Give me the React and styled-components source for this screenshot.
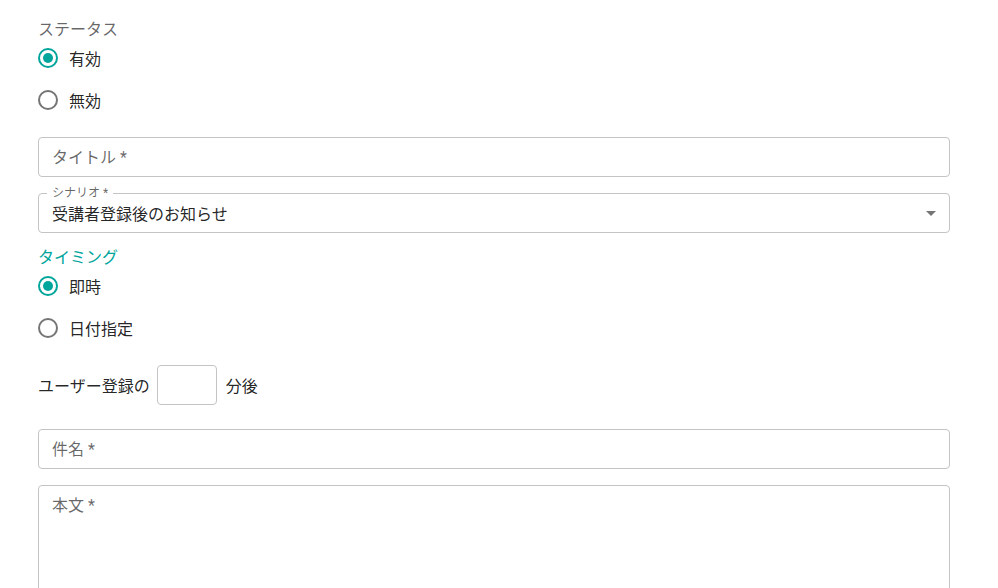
import React, { useState } from "react";
import styled, { createGlobalStyle } from "styled-components";

const GlobalStyle = createGlobalStyle`
  html, body { margin: 0; padding: 0; background: #fff; overflow: hidden; }
  body { font-family: Roboto, "Noto Sans CJK JP", sans-serif; color: rgba(0,0,0,0.87); }
  * { box-sizing: border-box; }
`;

const TEAL = "#00a59c";

const Page = styled.div`
  padding: 21px 48px 0 38px;
  width: 998px;
  height: 588px;
  overflow: hidden;
  display: flex;
  flex-direction: column;
  & > * { flex-shrink: 0; }
`;

const GroupLabel = styled.div`
  font-size: 16px;
  line-height: 18px;
  margin-bottom: -2px;
  color: ${(p) => (p.$active ? TEAL : "rgba(0,0,0,0.6)")};
  margin-top: ${(p) => p.$mt || 0}px;
`;

const RadioList = styled.div`
  display: flex;
  flex-direction: column;
`;

const RadioRow = styled.label`
  display: flex;
  align-items: center;
  height: 42px;
  gap: 9px;
  font-size: 16px;
  cursor: pointer;
  color: rgba(0,0,0,0.87);
`;

const RadioIconBox = styled.span`
  width: 24px;
  height: 24px;
  margin-left: -2px;
  display: inline-flex;
`;

function RadioIcon({ checked }) {
  const color = checked ? TEAL : "#757575";
  return (
    <RadioIconBox>
      <svg width="24" height="24" viewBox="0 0 24 24">
        <circle cx="12" cy="12" r="9" fill="none" stroke={color} strokeWidth="2" />
        {checked && <circle cx="12" cy="12" r="5" fill={color} />}
      </svg>
    </RadioIconBox>
  );
}

function RadioGroup({ options, value, onChange }) {
  return (
    <RadioList>
      {options.map((o) => (
        <RadioRow key={o} onClick={() => onChange(o)}>
          <RadioIcon checked={value === o} />
          {o}
        </RadioRow>
      ))}
    </RadioList>
  );
}

const TextInput = styled.input`
  display: block;
  width: 100%;
  height: 40px;
  margin-top: ${(p) => p.$mt || 0}px;
  padding: 0 13px;
  border: 1px solid #c4c4c4;
  border-radius: 4px;
  font: inherit;
  font-size: 16px;
  color: rgba(0,0,0,0.87);
  outline: none;
  &::placeholder { color: rgba(0,0,0,0.6); opacity: 1; }
`;

const TextArea = styled.textarea`
  display: block;
  width: 100%;
  height: 160px;
  margin-top: 16px;
  padding: 8px 13px;
  border: 1px solid #c4c4c4;
  border-radius: 4px;
  font: inherit;
  font-size: 16px;
  line-height: 23px;
  resize: none;
  outline: none;
  &::placeholder { color: rgba(0,0,0,0.6); opacity: 1; }
`;

const SelectBox = styled.div`
  position: relative;
  margin-top: 16px;
  height: 40px;
  border: 1px solid #c4c4c4;
  border-radius: 4px;
  display: flex;
  align-items: center;
  padding: 0 32px 0 13px;
  font-size: 16px;
  color: rgba(0,0,0,0.87);
`;

const FloatLabel = styled.span`
  position: absolute;
  left: 8px;
  top: -9px;
  padding: 0 5px;
  background: #fff;
  font-size: 12px;
  line-height: 16px;
  color: rgba(0,0,0,0.6);
`;

const Arrow = styled.svg`
  position: absolute;
  right: 6px;
  top: 7px;
`;

const DelayRow = styled.div`
  display: flex;
  align-items: center;
  margin-top: 16px;
  font-size: 16px;
  color: rgba(0,0,0,0.87);
`;

const SmallInput = styled.input`
  width: 60px;
  height: 40px;
  margin: 0 9px 0 7px;
  border: 1px solid #c4c4c4;
  border-radius: 4px;
  padding: 0 8px;
  font: inherit;
  font-size: 16px;
  outline: none;
`;

export default function App() {
  const [status, setStatus] = useState("有効");
  const [timing, setTiming] = useState("即時");
  return (
    <>
      <GlobalStyle />
      <Page>
        <GroupLabel>ステータス</GroupLabel>
        <RadioGroup options={["有効", "無効"]} value={status} onChange={setStatus} />
        <TextInput $mt={16} placeholder="タイトル *" />
        <SelectBox>
          <FloatLabel>シナリオ *</FloatLabel>
          受講者登録後のお知らせ
          <Arrow width="24" height="24" viewBox="0 0 24 24">
            <path d="M7 10l5 5 5-5z" fill="rgba(0,0,0,0.54)" />
          </Arrow>
        </SelectBox>
        <GroupLabel $active $mt={16}>タイミング</GroupLabel>
        <RadioGroup options={["即時", "日付指定"]} value={timing} onChange={setTiming} />
        <DelayRow>
          <span>ユーザー登録の</span>
          <SmallInput />
          <span>分後</span>
        </DelayRow>
        <TextInput $mt={24} placeholder="件名 *" />
        <TextArea placeholder="本文 *" />
      </Page>
    </>
  );
}
